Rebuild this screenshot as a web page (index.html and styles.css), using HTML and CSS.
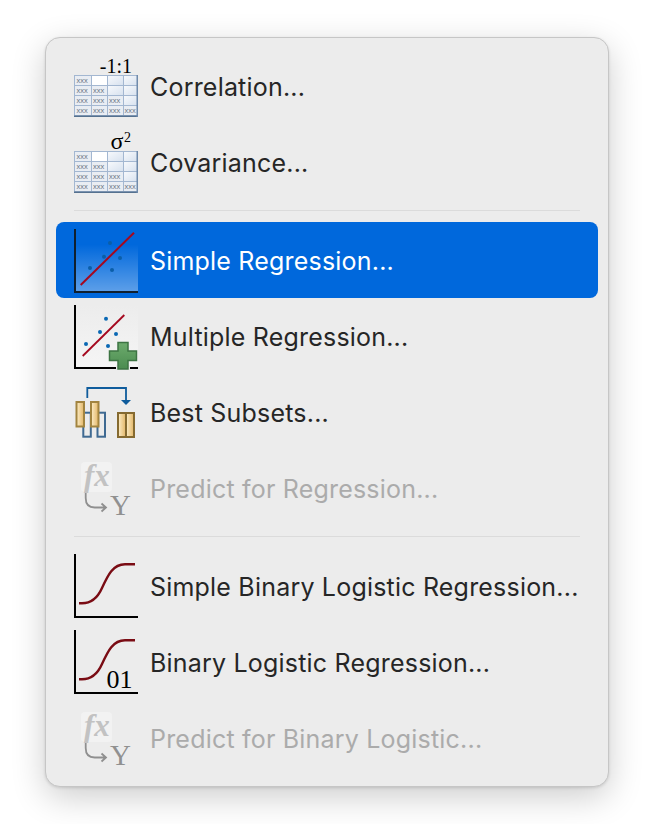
FILE: index.html
```html
<!DOCTYPE html>
<html lang="en">
<head>
    <meta charset="UTF-8">
    <title>Regression menu</title>
    <link rel="stylesheet" href="styles.css">
</head>
<body>
    <svg class="defs" width="0" height="0">
        <defs>
            <linearGradient id="cell-empty" x1="0" y1="0" x2="1" y2="1">
                <stop offset="0" stop-color="#f7f9fc"/>
                <stop offset="1" stop-color="#d8e2ef"/>
            </linearGradient>
            <linearGradient id="bar-fill" x1="0" y1="0" x2="1" y2="0">
                <stop offset="0" stop-color="#fdeec8"/>
                <stop offset="1" stop-color="#e2b566"/>
            </linearGradient>
            <linearGradient id="plot-light" x1="0" y1="0" x2="0" y2="1">
                <stop offset=".25" stop-color="#fff" stop-opacity="0"/>
                <stop offset="1" stop-color="#fff" stop-opacity=".36"/>
            </linearGradient>
            <linearGradient id="plot-plain" x1="0" y1="0" x2="0" y2="1">
                <stop offset="0" stop-color="#ececec"/>
                <stop offset="1" stop-color="#f5f5f5"/>
            </linearGradient>
            <linearGradient id="plus-fill" x1="0" y1="0" x2="0" y2="1">
                <stop offset="0" stop-color="#6dab6d"/>
                <stop offset="1" stop-color="#4b8c50"/>
            </linearGradient>

            <symbol id="table" viewBox="0 0 64 64">
                <rect x="0" y="21" width="64" height="42" fill="#a3b7d1"/>
                <rect x="1" y="22" width="16" height="9" fill="#e9edf3"/>
                <rect x="18" y="22" width="15" height="9" fill="#fff"/>
                <rect x="34" y="22" width="15" height="9" fill="url(#cell-empty)"/>
                <rect x="50" y="22" width="13" height="9" fill="url(#cell-empty)"/>
                <rect x="1" y="32" width="16" height="9" fill="#e9edf3"/>
                <rect x="18" y="32" width="15" height="9" fill="#e9edf3"/>
                <rect x="34" y="32" width="15" height="9" fill="url(#cell-empty)"/>
                <rect x="50" y="32" width="13" height="9" fill="url(#cell-empty)"/>
                <rect x="1" y="42" width="16" height="9" fill="#e9edf3"/>
                <rect x="18" y="42" width="15" height="9" fill="#e9edf3"/>
                <rect x="34" y="42" width="15" height="9" fill="#e9edf3"/>
                <rect x="50" y="42" width="13" height="9" fill="url(#cell-empty)"/>
                <rect x="1" y="52" width="16" height="9" fill="#e9edf3"/>
                <rect x="18" y="52" width="15" height="9" fill="#e9edf3"/>
                <rect x="34" y="52" width="15" height="9" fill="#e9edf3"/>
                <rect x="50" y="52" width="13" height="9" fill="#e9edf3"/>
                <rect x="0" y="61.500" width="64" height="1.500" fill="#55718f"/>
                <rect x="62.500" y="21" width="1.500" height="42" fill="#6f8aab"/>
                <g class="cell-text">
                    <text x="2.500" y="29">xxx</text>
                    <text x="2.500" y="39">xxx</text>
                    <text x="19" y="39">xxx</text>
                    <text x="2.500" y="49">xxx</text>
                    <text x="19" y="49">xxx</text>
                    <text x="35" y="49">xxx</text>
                    <text x="2.500" y="59">xxx</text>
                    <text x="19" y="59">xxx</text>
                    <text x="35" y="59">xxx</text>
                    <text x="50.500" y="59">xxx</text>
                </g>
            </symbol>

            <symbol id="fx-y" viewBox="0 0 64 64">
                <rect x="7" y="6" width="31" height="30" rx="4" fill="#f2f2f2"/>
                <text class="fx-text" x="10" y="30">fx</text>
                <path d="M11.700 37v5q0 9.500 9 9.500h11M27.500 47.500l4.500 4-4.500 4" fill="none" stroke="#8f8f8f" stroke-width="1.800"/>
                <text class="y-text" x="36" y="59">Y</text>
            </symbol>

            <symbol id="logistic-curve" viewBox="0 0 64 64">
                <path d="M0 0h2v62h62v2H0z" fill="#000"/>
                <path d="M5 49.300h3C18 49.300 24 43 28 34 34 21 39 10.300 51 10.300h10" fill="none" stroke="#7a0c14" stroke-width="2.400"/>
            </symbol>
        </defs>
    </svg>

    <div class="menu">
        <div class="item">
            <svg class="icon" viewBox="0 0 64 64">
                <use href="#table"/>
                <text class="serif-black" x="58" y="19" text-anchor="end" font-size="20">-1:1</text>
            </svg>
            <span class="label">Correlation...</span>
        </div>
        <div class="item">
            <svg class="icon" viewBox="0 0 64 64">
                <use href="#table"/>
                <text class="serif-black" x="36.500" y="19" font-size="24">σ</text>
                <text class="serif-black" x="50" y="12" font-size="14">2</text>
            </svg>
            <span class="label">Covariance...</span>
        </div>

        <div class="separator"></div>

        <div class="item selected">
            <svg class="icon" viewBox="0 0 64 64">
                <rect x="2" y="1" width="62" height="62" fill="url(#plot-light)"/>
                <path d="M0 1h2v62h62v2H0z" fill="#10202f"/>
                <g fill="#0a5ea8">
                    <circle cx="36" cy="15" r="2"/>
                    <circle cx="30" cy="28.700" r="2"/>
                    <circle cx="46" cy="30" r="2"/>
                    <circle cx="16" cy="40" r="2"/>
                    <circle cx="38" cy="42" r="2"/>
                </g>
                <path d="M6.700 57L60 4.700" stroke="#a5081f" stroke-width="2"/>
            </svg>
            <span class="label">Simple Regression...</span>
        </div>
        <div class="item">
            <svg class="icon" viewBox="0 0 64 64">
                <rect x="2" y="1" width="62" height="62" fill="url(#plot-plain)"/>
                <path d="M0 1h2v62h62v2H0z" fill="#000"/>
                <rect x="42" y="61" width="14" height="5" fill="#ececec"/>
                <g fill="#0a68b4">
                    <circle cx="32" cy="14.700" r="2"/>
                    <circle cx="26" cy="28" r="2"/>
                    <circle cx="42" cy="30" r="2"/>
                    <circle cx="12" cy="40" r="2"/>
                    <circle cx="34" cy="42" r="2"/>
                </g>
                <path d="M8.700 52L50.300 11" stroke="#a5081f" stroke-width="1.800"/>
                <path d="M44 38.500h10v8.500h8.500v9.500H54v8.500H44v-8.500h-8.500V47H44z" fill="url(#plus-fill)" stroke="#3d7443" stroke-width="1.500"/>
            </svg>
            <span class="label">Multiple Regression...</span>
        </div>
        <div class="item">
            <svg class="icon" viewBox="0 0 64 64">
                <g fill="none" stroke="#3f6a92" stroke-width="2">
                    <rect x="9.300" y="32.700" width="7.500" height="24"/>
                    <rect x="23.500" y="32.700" width="7.500" height="24"/>
                </g>
                <g fill="url(#bar-fill)" stroke="#a2843f" stroke-width="2">
                    <rect x="2.500" y="22" width="7.500" height="24.500"/>
                    <rect x="17" y="22" width="7.500" height="24.500"/>
                </g>
                <g fill="url(#bar-fill)" stroke="#856a30" stroke-width="2">
                    <rect x="44" y="33" width="8" height="24"/>
                    <rect x="52" y="33" width="8" height="24"/>
                </g>
                <path d="M13.300 18V8H52v12" fill="none" stroke="#0f5c9c" stroke-width="1.800"/>
                <path d="M47 20h10l-5 5z" fill="#0f5c9c"/>
            </svg>
            <span class="label">Best Subsets...</span>
        </div>
        <div class="item disabled">
            <svg class="icon" viewBox="0 0 64 64"><use href="#fx-y"/></svg>
            <span class="label">Predict for Regression...</span>
        </div>

        <div class="separator"></div>

        <div class="item">
            <svg class="icon" viewBox="0 0 64 64"><use href="#logistic-curve"/></svg>
            <span class="label">Simple Binary Logistic Regression...</span>
        </div>
        <div class="item">
            <svg class="icon" viewBox="0 0 64 64">
                <use href="#logistic-curve"/>
                <text class="serif-black" x="32.500" y="58" font-size="26">01</text>
            </svg>
            <span class="label">Binary Logistic Regression...</span>
        </div>
        <div class="item disabled">
            <svg class="icon" viewBox="0 0 64 64"><use href="#fx-y"/></svg>
            <span class="label">Predict for Binary Logistic...</span>
        </div>
    </div>
</body>
</html>
```

FILE: styles.css
```css
* {
    box-sizing: border-box;
}

body {
    margin: 0;
    padding: 37px 45px;
    background-color: #fff;
    font-family: "Inter", "Liberation Sans", sans-serif;
}

.defs {
    position: absolute;
}

.menu {
    display: flex;
    flex-direction: column;
    width: 564px;
    height: 750px;
    padding: 10px;
    background-color: #ececec;
    border: 1px solid #c6c6c6;
    border-radius: 15px;
    box-shadow: 0 10px 34px rgba(0, 0, 0, .2), 0 1px 3px rgba(0, 0, 0, .12);
}

.item {
    display: flex;
    align-items: center;
    gap: 12px;
    height: 76px;
    padding-left: 18px;
    border-radius: 8px;
    color: #262626;
}

.icon {
    flex: none;
    width: 64px;
    height: 64px;
    overflow: visible;
}

.label {
    padding-top: 2px;
    font-size: 25px;
    letter-spacing: .2px;
    line-height: 30px;
    white-space: nowrap;
}

.selected {
    background-color: #0068dc;
    color: #fff;
}

.disabled {
    color: #ababab;
}

.separator {
    height: 1px;
    margin: 10px 18px 11px;
    background-color: #dbdbdb;
}

.cell-text text {
    font-family: "Liberation Sans", sans-serif;
    font-size: 7.500px;
    fill: #6b7585;
}

.serif-black {
    font-family: "Liberation Serif", serif;
    fill: #000;
}

.fx-text {
    font-family: "Liberation Serif", serif;
    font-style: italic;
    font-weight: 700;
    font-size: 31px;
    fill: #c2c2c2;
}

.y-text {
    font-family: "Liberation Serif", serif;
    font-size: 29px;
    fill: #909090;
}
```
